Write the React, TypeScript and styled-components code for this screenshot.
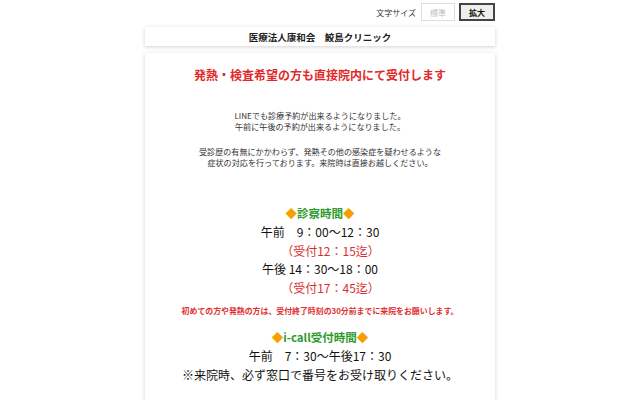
import React from "react";
import styled, { createGlobalStyle } from "styled-components";

const Global = createGlobalStyle`
  html, body { margin: 0; padding: 0; background: #fff; }
  body { font-family: "Noto Sans CJK JP", "Noto Sans", sans-serif; color: #222; }
`;

const Page = styled.div`
  width: 640px;
  display: flex;
  flex-direction: column;
  align-items: center;
`;

const TopBar = styled.div`
  width: 350px;
  display: flex;
  justify-content: flex-end;
  align-items: center;
  gap: 4px;
  padding-top: 3px;
  box-sizing: border-box;
`;

const SizeLabel = styled.span`
  font-size: 8px;
  color: #333;
  margin-right: 1px;
`;

const SizeButton = styled.button<{ $active?: boolean }>`
  font-family: inherit;
  font-size: 8px;
  height: 18px;
  width: ${(p) => (p.$active ? "36px" : "34px")};
  padding: 0;
  box-sizing: border-box;
  border: ${(p) => (p.$active ? "2px solid #444" : "1px solid #ddd")};
  background: ${(p) => (p.$active ? "#eee" : "#fff")};
  color: ${(p) => (p.$active ? "#111" : "#bbb")};
  font-weight: ${(p) => (p.$active ? 700 : 400)};
`;

const Card = styled.div`
  width: 350px;
  background: #fff;
  box-shadow: 0 1px 4px rgba(0, 0, 0, 0.18);
  box-sizing: border-box;
`;

const HeaderCard = styled(Card)`
  margin-top: 6px;
  height: 19px;
  display: flex;
  align-items: center;
  justify-content: center;
  font-size: 9.5px;
  font-weight: 700;
  color: #222;
`;

const MainCard = styled(Card)`
  margin-top: 7px;
  padding-top: 12px;
  padding-bottom: 20px;
  display: flex;
  flex-direction: column;
  align-items: center;
  text-align: center;
`;

const Headline = styled.div`
  color: #e02a2a;
  font-size: 12px;
  font-weight: 700;
  line-height: 20px;
`;

const Para = styled.p<{ $top: number }>`
  margin: ${(p) => p.$top}px 0 0;
  font-size: 8.1px;
  line-height: 11px;
  color: #333;
`;

const SectionTitle = styled.div<{ $top: number }>`
  margin-top: ${(p) => p.$top}px;
  color: #2e9a2e;
  font-size: 11.5px;
  font-weight: 700;
  line-height: 19px;
`;

const Diamond = styled.span`
  color: #f5a000;
`;

const TimeLine = styled.div`
  font-size: 12px;
  line-height: 18.5px;
  color: #111;
`;

const Reception = styled(TimeLine)`
  color: #d83030;
  padding-left: 21px;
`;

const Note = styled.div`
  margin-top: 8px;
  color: #e03030;
  font-size: 7.9px;
  font-weight: 700;
  line-height: 12px;
`;

export default function App() {
  return (
    <>
      <Global />
      <Page>
        <TopBar>
          <SizeLabel>文字サイズ</SizeLabel>
          <SizeButton>標準</SizeButton>
          <SizeButton $active>拡大</SizeButton>
        </TopBar>
        <HeaderCard>医療法人康和会　鮫島クリニック</HeaderCard>
        <MainCard>
          <Headline>発熱・検査希望の方も直接院内にて受付します</Headline>
          <Para $top={25}>
            LINEでも診療予約が出来るようになりました。
            <br />
            午前に午後の予約が出来るようになりました。
          </Para>
          <Para $top={14}>
            受診歴の有無にかかわらず、発熱その他の感染症を疑わせるような
            <br />
            症状の対応を行っております。来院時は直接お越しください。
          </Para>
          <SectionTitle $top={36}>
            <Diamond>◆</Diamond>診察時間<Diamond>◆</Diamond>
          </SectionTitle>
          <TimeLine>午前　9：00〜12：30</TimeLine>
          <Reception>（受付12：15迄）</Reception>
          <TimeLine>午後 14：30〜18：00</TimeLine>
          <Reception>（受付17：45迄）</Reception>
          <Note>初めての方や発熱の方は、受付終了時刻の30分前までに来院をお願いします。</Note>
          <SectionTitle $top={11}>
            <Diamond>◆</Diamond>i-call受付時間<Diamond>◆</Diamond>
          </SectionTitle>
          <TimeLine>午前　7：30〜午後17：30</TimeLine>
          <TimeLine>※来院時、必ず窓口で番号をお受け取りください。</TimeLine>
        </MainCard>
      </Page>
    </>
  );
}
